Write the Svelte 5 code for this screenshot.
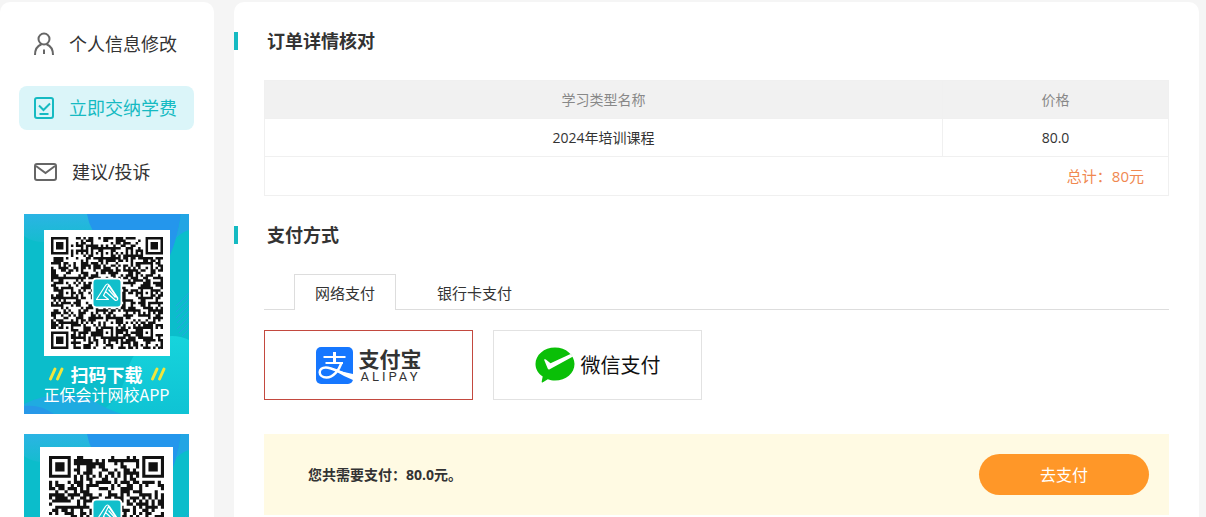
<script>
  const menu = [
    { id: "profile", label: "个人信息修改" },
    { id: "fees", label: "立即交纳学费" },
    { id: "feedback", label: "建议/投诉" },
  ];

  const tabs = ["网络支付", "银行卡支付"];

  let activeMenu = $state("fees");
  let activeTab = $state(0);
  let method = $state("alipay");

  const order = { name: "2024年培训课程", price: 80 };

  function inSquare(x, y, cx, cy, r) {
    return Math.max(Math.abs(x - cx), Math.abs(y - cy)) <= r;
  }

  // code-like module pattern: finders, alignment marks, timing lines and filler
  function qrPath(size, seed, marks) {
    let state = seed;
    let d = "";
    const finders = [
      [3, 3],
      [size - 4, 3],
      [3, size - 4],
    ];
    for (let y = 0; y < size; y++) {
      for (let x = 0; x < size; x++) {
        state = (Math.imul(state, 1664525) + 1013904223) >>> 0;
        let on = ((state >>> 16) & 255) < 136;
        if (x === 6 || y === 6) on = (x + y) % 2 === 0;
        for (const [cx, cy] of marks) {
          if (inSquare(x, y, cx, cy, 2)) on = !inSquare(x, y, cx, cy, 1) || (x === cx && y === cy);
        }
        for (const [cx, cy] of finders) {
          if (inSquare(x, y, cx, cy, 4)) {
            on = inSquare(x, y, cx, cy, 3) && (!inSquare(x, y, cx, cy, 2) || inSquare(x, y, cx, cy, 1));
          }
        }
        if (on) d += `M${x} ${y}h1v1h-1z`;
      }
    }
    return d;
  }

  const codes = [
    {
      size: 45,
      wide: false,
      d: qrPath(45, 2024, [[22, 6], [6, 22], [38, 22], [22, 38], [38, 38]]),
    },
    { size: 37, wide: true, d: qrPath(37, 977, [[30, 30]]) },
  ];
</script>

<div class="page">
  <aside class="sidebar">
    <nav>
      {#each menu as item}
        <a
          href="#{item.id}"
          class="menu-item"
          class:active={activeMenu === item.id}
          onclick={() => (activeMenu = item.id)}
        >
          {#if item.id === "profile"}
            <svg width="20" height="24" viewBox="0 0 20 24" fill="none" stroke="currentColor" stroke-width="2">
              <circle cx="10" cy="7" r="5.500" />
              <path d="M1 23C1 17.500 3.500 13.700 7.500 12.200M19 23C19 17.500 16.500 13.700 12.500 12.200M10 17.500v4.500" />
            </svg>
          {:else if item.id === "fees"}
            <svg width="20" height="24" viewBox="0 0 20 24" fill="none" stroke="currentColor" stroke-width="2">
              <rect x="1" y="2" width="18" height="20" rx="2" />
              <path d="M5 9.500l4.500 4.500L16 7.500M5.500 18h9" />
            </svg>
          {:else}
            <svg width="23" height="24" viewBox="0 0 23 24" fill="none" stroke="currentColor" stroke-width="2">
              <rect x="1" y="4" width="21" height="16" rx="2" />
              <path d="M2 6l9.500 7L21 6" />
            </svg>
          {/if}
          <span>{item.label}</span>
        </a>
      {/each}
    </nav>

    {#each codes as code}
      <div class="app-card" class:wide={code.wide}>
        <svg class="app-bg" viewBox="0 0 165 200" preserveAspectRatio="none" aria-hidden="true">
          <defs>
            <linearGradient id="sky" x1="0" y1="0" x2="0" y2="1">
              <stop offset="0" stop-color="#2bb4e4" />
              <stop offset="1" stop-color="#16bccf" />
            </linearGradient>
            <linearGradient id="sea" x1="0" y1="0" x2="0" y2="1">
              <stop offset="0" stop-color="#16d4dc" />
              <stop offset="1" stop-color="#0fc3d4" />
            </linearGradient>
          </defs>
          <rect width="165" height="200" fill="#0bbdcb" />
          <path d="M0 0H80V28H20Q8 28 0 22Z" fill="url(#sky)" />
          <path d="M63 0H157Q154 24 144 46L130 60L80 30Q66 18 63 0Z" fill="#2496ec" />
          <path d="M157 0H165V16Q158 18 152 24Q156 12 157 0Z" fill="#22a5e4" />
          <path d="M152 92L165 79M152 98L165 85M152 104L165 91M153 109L165 97M153 115L165 103M155 119L165 109M158 122L165 115" stroke="#23a7dd" stroke-width="1" />
          <path d="M102 160Q112 123 148 122Q157 122 165 126V200H70Q96 190 102 160Z" fill="url(#sea)" />
          <path d="M0 190Q34 174 68 186Q84 196 98 200H0Z" fill="#1fabe1" />
          <path d="M0 192Q16 190 30 200H0Z" fill="#2798e8" />
        </svg>
        <div class="qr-box">
          <svg class="qr" viewBox="0 0 {code.size} {code.size}" role="img" aria-label="APP">
            <path d={code.d} fill="#111" />
          </svg>
          <svg class="qr-logo" width="31" height="31" viewBox="0 0 31 31" aria-hidden="true">
            <rect x="1" y="1" width="29" height="29" rx="4" fill="#11bfcb" stroke="#fff" stroke-width="2" />
            <path
              d="M5 22L14 8Q16 5 18 8L26 20Q27 23 24 23L14 14L12 18L17 22ZM14 14L17 8L26 21M17 12L24 20"
              fill="none"
              stroke="#fff"
              stroke-width="1.200"
              stroke-linejoin="round"
            />
          </svg>
        </div>
        <div class="app-title">
          <svg width="16" height="14" viewBox="0 0 16 14" stroke="#f2e63c" stroke-width="3" stroke-linecap="round">
            <path d="M2.500 12L7 2M9.500 12L14 2" />
          </svg>
          <strong>扫码下载</strong>
          <svg width="16" height="14" viewBox="0 0 16 14" stroke="#f2e63c" stroke-width="3" stroke-linecap="round">
            <path d="M2.500 12L7 2M9.500 12L14 2" />
          </svg>
        </div>
        <div class="app-name">正保会计网校APP</div>
      </div>
    {/each}
  </aside>

  <main class="content">
    <h2>订单详情核对</h2>
    <div class="section">
      <table>
        <thead>
          <tr>
            <th class="name-col">学习类型名称</th>
            <th>价格</th>
          </tr>
        </thead>
        <tbody>
          <tr>
            <td>{order.name}</td>
            <td>{order.price.toFixed(1)}</td>
          </tr>
          <tr>
            <td colspan="2" class="total">总计：{order.price}元</td>
          </tr>
        </tbody>
      </table>
    </div>

    <h2>支付方式</h2>
    <div class="section">
      <div class="tabs" role="tablist">
        {#each tabs as tab, i}
          <button
            type="button"
            role="tab"
            class="tab"
            class:active={activeTab === i}
            aria-selected={activeTab === i}
            onclick={() => (activeTab = i)}>{tab}</button
          >
        {/each}
      </div>

      <div class="methods">
        <label class="method" class:selected={method === "alipay"}>
          <input type="radio" name="method" value="alipay" bind:group={method} />
          <svg width="37" height="37" viewBox="0 0 37 37" aria-hidden="true">
            <rect width="37" height="37" rx="5" fill="#1677ff" />
            <g fill="none" stroke="#fff">
              <path d="M7.500 10H29.500M9.500 16H27" stroke-width="2.200" />
              <path d="M18.500 5V16" stroke-width="3" />
              <path
                d="M25.500 16C23 23 17.500 30.500 10.500 30.500C6 30.500 3.700 28 3.700 25.300C3.700 22.500 6.200 20.400 9.800 20.400C17 20.400 25 26.500 37 29.500"
                stroke-width="2.500"
              />
            </g>
            <path d="M20 22.500Q28 25.500 37 27V33Q28 29.500 20 24.500Z" fill="#fff" />
          </svg>
          <span class="alipay-name">
            <strong>支付宝</strong>
            <span class="alipay-latin">ALIPAY</span>
          </span>
        </label>
        <label class="method" class:selected={method === "wechat"}>
          <input type="radio" name="method" value="wechat" bind:group={method} />
          <svg width="40" height="36" viewBox="0 0 40 36" aria-hidden="true">
            <path
              d="M20 0.500C31 0.500 39.500 8 39.500 17C39.500 26 31 33.500 20 33.500C17.300 33.500 15 33 12.800 32.200L7.500 35.500Q6.500 35.700 6.700 34.500L7.700 29.500C3 26.500 0.500 22 0.500 17C0.500 8 9 0.500 20 0.500Z"
              fill="#0abf07"
            />
            <path d="M9 12.500Q10.500 11.700 11.500 13L15.500 16.200L35.500 7L38 9.500L14.700 22.200Q13.300 22.800 12.700 21.500Z" fill="#fff" />
          </svg>
          <span class="wechat-name">微信支付</span>
        </label>
      </div>

      <div class="pay-bar">
        <strong>您共需要支付：{order.price.toFixed(1)}元。</strong>
        <button type="button" class="pay-button">去支付</button>
      </div>
    </div>
  </main>
</div>

<style>
  :global(body) {
    background: #f5f5f5;
  }

  .page {
    display: flex;
    align-items: stretch;
    gap: 20px;
    padding: 2px 7px 20px 0;
    color: #333;
    font-family: "Open Sans", "Noto Sans CJK SC", sans-serif;
    font-size: 14px;
    line-height: 20px;
  }

  .sidebar {
    flex: 0 0 214px;
    box-sizing: border-box;
    padding: 20px 20px 20px 19px;
    background: #fff;
    border-radius: 10px;
  }

  nav {
    display: flex;
    flex-direction: column;
    gap: 20px;
    margin-bottom: 20px;
  }

  .menu-item {
    display: flex;
    align-items: center;
    gap: 15px;
    height: 44px;
    padding-left: 15px;
    border-radius: 8px;
    color: #333;
    font-size: 18px;
    text-decoration: none;
  }

  .menu-item svg {
    color: #666;
  }

  .menu-item.active {
    background: #dbf5f9;
    color: #15bac2;
  }

  .menu-item.active svg {
    color: #15bac2;
  }

  .app-card {
    position: relative;
    display: flex;
    flex-direction: column;
    align-items: center;
    box-sizing: border-box;
    height: 200px;
    margin: 0 5px 20px;
    padding-top: 16px;
    color: #fff;
  }

  .app-card.wide {
    padding-top: 13px;
  }

  .app-bg {
    position: absolute;
    inset: 0;
    width: 100%;
    height: 100%;
  }

  .qr-box {
    position: relative;
    display: flex;
    padding: 7px;
    background: #fff;
  }

  .wide .qr-box {
    padding: 9px;
  }

  .qr {
    width: 112px;
    height: 112px;
  }

  .wide .qr {
    width: 115px;
    height: 115px;
  }

  .qr-logo {
    position: absolute;
    top: 50%;
    left: 50%;
    transform: translate(-50%, -50%);
  }

  .app-title,
  .app-name {
    position: relative;
    font-family: "Noto Sans CJK SC", sans-serif;
  }

  .app-title {
    display: flex;
    align-items: center;
    gap: 7px;
    margin-top: 8px;
    font-size: 18px;
  }

  .app-name {
    font-size: 16px;
  }

  .content {
    flex: 1;
    min-width: 0;
    background: #fff;
    border-radius: 10px;
  }

  h2 {
    margin: 30px 0;
    padding-left: 29px;
    border-left: 4px solid #15bac2;
    font-size: 18px;
    line-height: 18px;
  }

  .section {
    margin: 0 30px;
  }

  table {
    width: 100%;
    border-collapse: collapse;
    text-align: center;
  }

  th,
  td {
    height: 37px;
    padding: 0;
    border: 1px solid #f0f0f0;
  }

  th {
    background: #f1f1f1;
    color: #888;
    font-weight: 400;
  }

  .name-col {
    width: 75%;
  }

  td.total {
    height: 38px;
    padding-right: 24px;
    color: #f08850;
    font-size: 15px;
    text-align: right;
  }

  .tabs {
    display: flex;
    gap: 20px;
    padding-left: 30px;
    border-bottom: 1px solid #ddd;
  }

  .tab {
    height: 36px;
    margin-bottom: -1px;
    padding: 0 20px;
    border: 1px solid transparent;
    border-bottom: 0;
    background: none;
    color: #333;
    font: inherit;
    font-size: 15px;
    cursor: pointer;
  }

  .tab.active {
    border-color: #ddd;
    background: #fff;
  }

  .methods {
    display: flex;
    gap: 20px;
    margin-top: 20px;
  }

  .method {
    position: relative;
    display: flex;
    align-items: center;
    justify-content: center;
    gap: 6px;
    box-sizing: border-box;
    width: 209px;
    height: 70px;
    border: 1px solid #e2e2e2;
    font-family: "Noto Sans CJK SC", sans-serif;
    cursor: pointer;
  }

  .method.selected {
    border-color: #c3493f;
  }

  .method input {
    position: absolute;
    inset: 0;
    margin: 0;
    opacity: 0;
  }

  .alipay-name {
    display: flex;
    flex-direction: column;
    font-size: 21px;
    line-height: 24px;
  }

  .alipay-latin {
    padding-left: 2px;
    font-family: Roboto, sans-serif;
    font-size: 13px;
    line-height: 14px;
    letter-spacing: 3px;
  }

  .wechat-name {
    color: #111;
    font-size: 20px;
  }

  .pay-bar {
    display: flex;
    align-items: center;
    justify-content: space-between;
    margin-top: 34px;
    padding: 20px 20px 20px 44px;
    background: #fffae3;
  }

  .pay-button {
    width: 170px;
    height: 41px;
    border: 0;
    border-radius: 21px;
    background: #ff9728;
    color: #fff;
    font: inherit;
    font-size: 16px;
    cursor: pointer;
  }
</style>
